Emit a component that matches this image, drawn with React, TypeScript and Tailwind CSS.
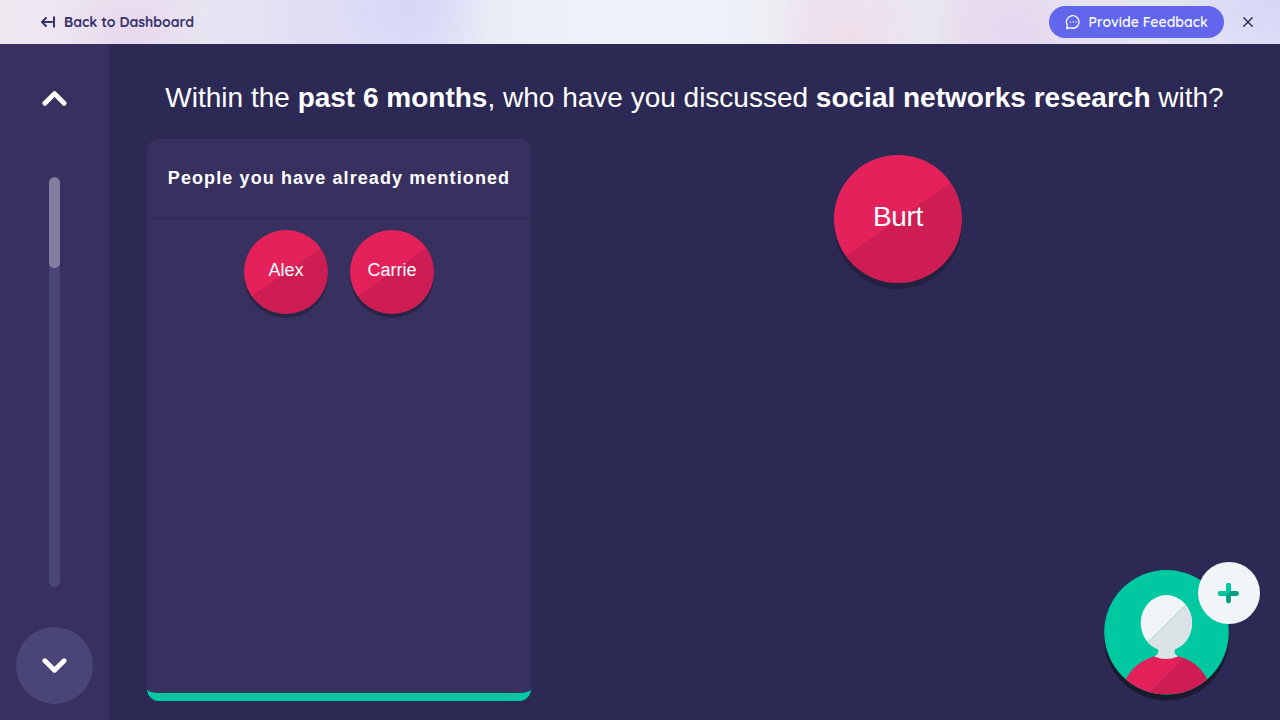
import React from "react";

const helvetica = "font-['Liberation_Sans',Arial,sans-serif]";

function Node({ label, large = false }: { label: string; large?: boolean }) {
  const size = large
    ? "size-32 text-[28px] tracking-[-0.3px] shadow-[0_6px_0_#242041] pb-1"
    : "size-[84.5px] text-[18px] shadow-[0_4px_0_#2a2548] pb-[3px]";
  return (
    <div
      className={`flex shrink-0 items-center justify-center rounded-full bg-[linear-gradient(145deg,#e4215b_50%,#cd1d53_50.4%)] text-white ${size}`}
    >
      {label}
    </div>
  );
}

function Chevron({ up = false }: { up?: boolean }) {
  return (
    <svg width="26" height="18" viewBox="0 0 26 18" fill="none" stroke="#fff" strokeWidth="4.8" strokeLinecap="round" strokeLinejoin="round">
      <path d={up ? "M2.9 13.2 12.5 3.6 22.1 13.2" : "M2.9 3.7 12.5 13.300 22.1 3.7"} />
    </svg>
  );
}

function TopBar() {
  return (
    <header className="flex h-11 shrink-0 items-center justify-between bg-[radial-gradient(ellipse_80px_70px_at_130px_28px,#e8d8ed_0%,#e8d8ed00_100%),radial-gradient(ellipse_90px_90px_at_408px_0px,#d7d6f8_0%,#d7d6f800_100%),radial-gradient(ellipse_75px_60px_at_848px_36px,#efdeea_0%,#efdeea00_100%),radial-gradient(ellipse_75px_70px_at_1012px_30px,#e6d6ee_0%,#e6d6ee00_100%),radial-gradient(ellipse_100px_60px_at_1275px_0px,#d7d6f8_0%,#d7d6f800_100%),linear-gradient(90deg,#efe8f1_0px,#e7e5f3_220px,#e1def3_310px,#dfe1f6_420px,#e8edf5_480px,#ebf0f9_530px,#ecf1fa_700px,#edeff4_765px,#ece5f0_810px,#e9e7f2_920px,#e9e0f0_970px,#e7e2f2_1070px,#e6e6f3_1150px,#dedff5_1280px)] pl-10 pr-[26px] font-['Quicksand','Lato',sans-serif] text-[14px] text-[#2d2955]">
      <div className="flex items-center gap-2 font-bold text-[#35316a]">
        <svg width="16" height="14" viewBox="0 0 16 14" fill="none" stroke="currentColor" strokeWidth="2">
          <path d="M2 7h10M6 3 2 7l4 4" strokeLinecap="round" strokeLinejoin="round" />
          <path d="M14 1.5v11" />
        </svg>
        <span>Back to Dashboard</span>
      </div>
      <div className="flex items-center gap-[18px]">
        <button className="flex h-8 w-[175px] items-center gap-[7.5px] rounded-full bg-[#6166ed] pl-4 font-semibold text-white">
          <svg className="shrink-0" width="16" height="16" viewBox="0 0 16 16" fill="none" stroke="currentColor" strokeWidth="1.3" strokeLinecap="round" strokeLinejoin="round">
            <path d="M1.600 14.500 2.400 11.300A6.300 6.300 0 1 1 5.200 13.700Z" />
            <path d="M5.400 8h.01M8.300 8h.01M11.200 8h.01" strokeWidth="1.4" />
          </svg>
          <span className="whitespace-nowrap">Provide Feedback</span>
        </button>
        <svg width="12" height="12" viewBox="0 0 12 12" fill="none" stroke="currentColor" strokeWidth="1.4" strokeLinecap="round">
          <path d="m1.8 1.8 8.4 8.4M10.2 1.8l-8.4 8.4" />
        </svg>
      </div>
    </header>
  );
}

function Sidebar() {
  return (
    <nav className="flex w-[109px] shrink-0 flex-col items-center bg-[#38315f] pb-4 pt-4">
      <button className="flex size-[77px] items-center justify-center">
        <Chevron up />
      </button>
      <div className="mt-10 h-[410px] w-[11px] overflow-hidden rounded-full bg-[#4a4577]">
        <div className="h-[91px] rounded-full bg-[#847da0]" />
      </div>
      <button className="mt-10 flex size-[77px] items-center justify-center rounded-full bg-[#4a4577]">
        <Chevron />
      </button>
    </nav>
  );
}

function AddPerson() {
  return (
    <svg className="absolute bottom-[18px] right-5" width="156" height="140" viewBox="0 0 156 140">
      <defs>
        <clipPath id="avatar"><circle cx="62.5" cy="70.2" r="62.3" /></clipPath>
        <clipPath id="head"><ellipse cx="62.4" cy="61" rx="25.7" ry="28" /></clipPath>
        <clipPath id="body"><path d="M14 140C20 107 40 93 62.500 93s42.500 14 48.500 47Z" /></clipPath>
      </defs>
      <circle cx="62.5" cy="76" r="62.5" fill="#1b1b30" />
      <circle cx="62.5" cy="70.2" r="62.3" fill="#00c9a2" />
      <g clipPath="url(#avatar)">
        <g clipPath="url(#body)">
          <path d="M0 90h156v42H0Z" fill="#e4215b" />
          <path d="M86 89.500 43.600 132H122V89.500Z" fill="#cd1d53" />
          <path d="M86 89.500 43.600 132" stroke="#b94068" strokeWidth=".6" />
        </g>
        <path d="M54 84v4q1.500 3-3.500 6.500Q62 99.500 74 94.500 69 91 71 88v-4Z" fill="#dae2e5" />
      </g>
      <g clipPath="url(#head)">
        <path d="M30 30h65v65H30Z" fill="#f1f5f7" />
        <path d="M90 34.500 34 89.600V95h60V34.500Z" fill="#dae2e5" />
        <path d="M90 34.500 34 89.600" stroke="#9ad8cd" strokeWidth=".8" />
      </g>
      <circle cx="125" cy="31" r="31" fill="#f1f5f7" />
      <g strokeLinecap="round" strokeWidth="4.8">
        <path d="M116.300 31.500h16.200" stroke="#009f80" />
        <path d="M124.500 23.500v15.600" stroke="#009f80" />
        <path d="M124.500 31.500h-8.200M124.500 23.500v7.600" stroke="#00c9a2" />
        <path d="M126.900 29.100v4.800h-4.800Z" fill="#009f80" />
      </g>
    </svg>
  );
}

export default function App() {
  return (
    <div className="flex h-[720px] w-[1280px] flex-col overflow-hidden bg-[#2d2955]">
      <TopBar />
      <div className={`flex min-h-0 flex-1 ${helvetica}`}>
        <Sidebar />
        <main className="relative flex min-w-0 flex-1 flex-col px-[38px] pb-[19px] pt-[33px] text-white">
          <h1 className="h-[62px] whitespace-nowrap text-center text-[28px] leading-[42px]">
            Within the <strong>past 6 months</strong>, who have you discussed <strong>social networks research</strong> with?
          </h1>
          <div className="flex min-h-0 flex-1">
            <section className="flex w-96 shrink-0 flex-col rounded-xl border-b-8 border-[#00c9a2] bg-[#38315f]">
              <h2 className="flex h-20 shrink-0 items-center justify-center whitespace-nowrap border-b-[1.5px] border-[#2d2955] pb-px text-[18px] font-bold tracking-[1.1px]">
                People you have already mentioned
              </h2>
              <div className="flex justify-center gap-[21.5px] pt-[10.5px]">
                <Node label="Alex" />
                <Node label="Carrie" />
              </div>
            </section>
            <div className="flex flex-1 justify-center pl-[23px] pt-4">
              <Node label="Burt" large />
            </div>
          </div>
          <AddPerson />
        </main>
      </div>
    </div>
  );
}
